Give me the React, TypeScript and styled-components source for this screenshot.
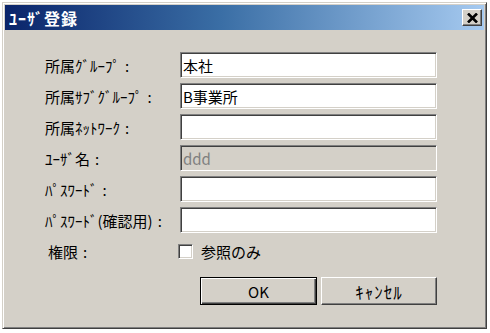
import styled, { createGlobalStyle } from "styled-components";

const GlobalStyle = createGlobalStyle`
  html, body {
    margin: 0;
    background: #ffffff;
  }
  * {
    box-sizing: border-box;
  }
`;

const FONT = `"MS UI Gothic", "Noto Sans CJK JP", sans-serif`;

const Window = styled.div`
  margin: 2px 0 0 2px;
  width: 485px;
  height: 327px;
  padding: 2px;
  background: #d4d0c8;
  border: 1px solid;
  border-color: #d4d0c8 #404040 #404040 #d4d0c8;
  box-shadow: inset 1px 1px #ffffff, inset -1px -1px #808080;
  display: flex;
  flex-direction: column;
  font-family: ${FONT};
`;

const TitleBar = styled.div`
  height: 25px;
  display: flex;
  align-items: center;
  justify-content: space-between;
  padding: 0 2px 0 4px;
  background: linear-gradient(to right, #0a246a 0%, #3a6ea5 45%, #a6caf0 100%);
`;

const Title = styled.span`
  color: #ffffff;
  font-size: 16px;
  font-weight: bold;
  letter-spacing: 1px;
`;

const CloseButton = styled.button`
  width: 20px;
  height: 17px;
  padding: 0;
  display: flex;
  align-items: center;
  justify-content: center;
  background: #d4d0c8;
  border: 1px solid;
  border-color: #ffffff #404040 #404040 #ffffff;
  box-shadow: inset -1px -1px #808080;
`;

const Body = styled.div`
  flex: 1;
  padding: 22px 0 0 40px;
`;

const Form = styled.div`
  display: grid;
  grid-template-columns: 135px 257px;
  grid-auto-rows: 26px;
  row-gap: 5px;
  align-items: center;
`;

const Label = styled.span<{ $indent?: number }>`
  font-size: 15px;
  color: #000000;
  padding-left: ${(p) => p.$indent ?? 0}px;
  white-space: nowrap;
`;

const Colon = styled.span`
  margin-left: 5px;
`;

const Field = styled.div<{ $disabled?: boolean }>`
  height: 26px;
  display: flex;
  align-items: center;
  padding: 0 2px;
  font-size: 15px;
  color: ${(p) => (p.$disabled ? "#808080" : "#000000")};
  background: ${(p) => (p.$disabled ? "#d4d0c8" : "#ffffff")};
  border: 1px solid;
  border-color: #808080 #ffffff #ffffff #808080;
  box-shadow: inset 1px 1px #404040, inset -1px -1px #d4d0c8;
`;

const CheckRow = styled.label`
  display: flex;
  align-items: center;
  gap: 8px;
  margin-left: -2px;
  font-size: 15px;
`;

const CheckBox = styled.span`
  width: 15px;
  height: 15px;
  background: #ffffff;
  border: 1px solid;
  border-color: #808080 #ffffff #ffffff #808080;
  box-shadow: inset 1px 1px #404040, inset -1px -1px #d4d0c8;
`;

const ButtonRow = styled.div`
  grid-column: 2;
  display: flex;
  gap: 4px;
  margin: 18px 0 0 20px;
  height: 28px;
`;

const Button = styled.button<{ $default?: boolean; $width: number }>`
  width: ${(p) => p.$width}px;
  height: 28px;
  padding: 0;
  font-family: ${FONT};
  font-size: ${(p) => (p.$default ? 15 : 17)}px;
  letter-spacing: ${(p) => (p.$default ? 0 : 1)}px;
  color: #000000;
  background: #d4d0c8;
  border: 1px solid;
  border-color: ${(p) =>
    p.$default ? "#000000" : "#ffffff #404040 #404040 #ffffff"};
  box-shadow: ${(p) =>
    p.$default
      ? "inset 1px 1px #ffffff, inset -1px -1px #404040, inset -2px -2px #808080"
      : "inset -1px -1px #808080"};
`;

function CloseIcon() {
  return (
    <svg width="11" height="10" viewBox="0 0 11 10">
      <path d="M1 0.5 L10 9.5 M10 0.5 L1 9.5" stroke="#000" strokeWidth="2.6" />
    </svg>
  );
}

const rows: { label: string; value: string; disabled?: boolean }[] = [
  { label: "所属ｸﾞﾙｰﾌﾟ", value: "本社" },
  { label: "所属ｻﾌﾞｸﾞﾙｰﾌﾟ", value: "B事業所" },
  { label: "所属ﾈｯﾄﾜｰｸ", value: "" },
  { label: "ﾕｰｻﾞ名", value: "ddd", disabled: true },
  { label: "ﾊﾟｽﾜｰﾄﾞ", value: "" },
  { label: "ﾊﾟｽﾜｰﾄﾞ(確認用)", value: "" },
];

export default function App() {
  return (
    <>
      <GlobalStyle />
      <Window>
        <TitleBar>
          <Title>ﾕｰｻﾞ登録</Title>
          <CloseButton>
            <CloseIcon />
          </CloseButton>
        </TitleBar>
        <Body>
          <Form>
            {rows.map((r) => (
              <>
                <Label key={r.label}>
                  {r.label}
                  <Colon>:</Colon>
                </Label>
                <Field $disabled={r.disabled}>{r.value}</Field>
              </>
            ))}
            <Label $indent={3}>
              権限<Colon>:</Colon>
            </Label>
            <CheckRow>
              <CheckBox />
              参照のみ
            </CheckRow>
            <ButtonRow>
              <Button $default $width={118}>
                OK
              </Button>
              <Button $width={117}>ｷｬﾝｾﾙ</Button>
            </ButtonRow>
          </Form>
        </Body>
      </Window>
    </>
  );
}
